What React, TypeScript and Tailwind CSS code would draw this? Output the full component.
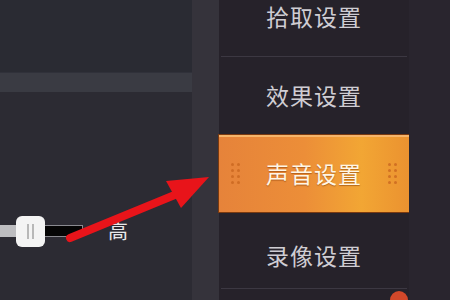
import React from "react";

const menuFont = { fontFamily: '"Noto Sans CJK SC", "Noto Sans", sans-serif' };

function Dots() {
  return (
    <div className="grid grid-cols-2 gap-x-[3px] gap-y-[3px]">
      {[0, 1, 2, 3, 4, 5, 6, 7].map((i) => (
        <span key={i} className="h-[3px] w-[3px] rounded-full bg-[#c9661f] opacity-80" />
      ))}
    </div>
  );
}

export default function App() {
  return (
    <div className="relative h-[300px] w-[450px] overflow-hidden bg-[#2a2830]" style={menuFont}>
      <div className="flex h-full">
        {/* left settings area */}
        <div className="flex w-[192px] flex-col bg-[#2b2c34]">
          <div className="h-[73px] border-b border-[#30313a] bg-[#2a2b33]" />
          <div className="h-[19px] bg-[#3a3b43]" />
          <div className="flex flex-1 flex-col bg-[#2c2b33]">
            <div className="mt-[133px] flex h-[12px] items-center">
              <div className="relative flex h-[12px] w-[83px] items-center">
                <div className="h-full w-[20px] bg-[#bdbdc0]" />
                <div className="h-full flex-1 border border-[#8a8a90] bg-[#050505]" />
                <div className="absolute left-[16px] top-[-9px] flex h-[31px] w-[29px] items-center justify-center gap-[3px] rounded-[6px] bg-[#f4f4f4]">
                  <span className="h-[15px] w-[2px] bg-[#b8b8b8]" />
                  <span className="h-[15px] w-[2px] bg-[#b8b8b8]" />
                </div>
              </div>
              <span className="ml-[25px] text-[20px] leading-none text-[#e8e8ea]">高</span>
            </div>
          </div>
        </div>
        {/* divider strip */}
        <div className="w-[27px] bg-[#35333b]" />
        {/* menu panel */}
        <div className="w-[190px] bg-[#26222a] px-[2px]">
          <div className="flex flex-col">
            <div className="flex h-[57px] justify-center border-b border-[#3c3842] pt-[5px]">
              <span className="text-[23px] leading-none tracking-[1px] text-[#cfcdd3]">拾取设置</span>
            </div>
            <div className="flex h-[77px] items-center justify-center">
              <span className="text-[23px] leading-none tracking-[1px] text-[#cfcdd3]">效果设置</span>
            </div>
            <div className="mx-[-3px] flex h-[79px] items-center justify-between border border-[#7a3a10] bg-[linear-gradient(90deg,#e6833a_0%,#ec8e38_45%,#f2a634_75%,#eb9230_100%)] px-[12px] shadow-[inset_0_2px_0_#f6b56a]">
              <Dots />
              <span className="text-[23px] leading-none tracking-[1px] text-[#fff6e6] [text-shadow:0_1px_1px_rgba(120,50,0,0.5)]">
                声音设置
              </span>
              <Dots />
            </div>
            <div className="flex h-[76px] items-center justify-center border-b border-[#3c3842] pt-[10px]">
              <span className="text-[23px] leading-none tracking-[1px] text-[#cfcdd3]">录像设置</span>
            </div>
          </div>
        </div>
        <div className="flex-1 bg-[#29252e]" />
      </div>

      {/* red arrow annotation */}
      <svg className="absolute left-0 top-0" width="450" height="300" viewBox="0 0 450 300">
        <line x1="70" y1="238" x2="182" y2="192" stroke="#e8141a" strokeWidth="8" strokeLinecap="round" />
        <polygon points="209,177 166,181 181,208" fill="#e8141a" />
      </svg>

      {/* badge bottom right */}
      <div className="absolute left-[390px] top-[291px] h-[18px] w-[18px] rounded-full bg-[#d2482a]" />
    </div>
  );
}
